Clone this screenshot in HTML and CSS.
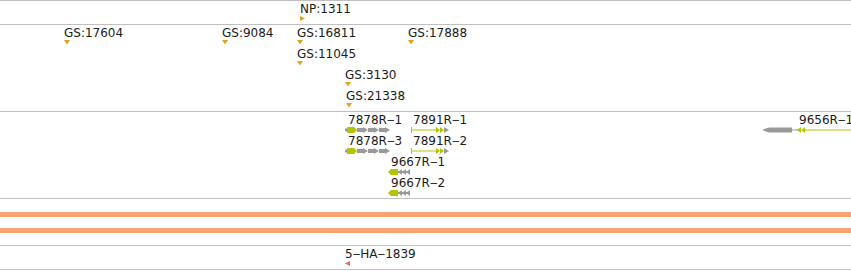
FILE: index.html
```html
<!DOCTYPE html>
<html>
<head>
<meta charset="utf-8">
<link rel="stylesheet" href="styles.css">
</head>
<body>
<div class="browser">
  <div class="track t-np">
    <div class="feat" style="left:300px;top:1px"><span class="lbl">NP:1311</span><svg class="mk" width="6" height="6"><polygon points="0,0 5,2.5 0,5" fill="#e3a21c"/></svg></div>
  </div>
  <div class="track t-gs">
    <div class="feat" style="left:64px;top:1px"><span class="lbl">GS:17604</span><svg class="mk" width="7" height="5"><polygon points="0,0 6,0 3,4.5" fill="#e3a21c"/></svg></div>
    <div class="feat" style="left:222px;top:1px"><span class="lbl">GS:9084</span><svg class="mk" width="7" height="5"><polygon points="0,0 6,0 3,4.5" fill="#e3a21c"/></svg></div>
    <div class="feat" style="left:297px;top:1px"><span class="lbl">GS:16811</span><svg class="mk" width="7" height="5"><polygon points="0,0 6,0 3,4.5" fill="#e3a21c"/></svg></div>
    <div class="feat" style="left:408px;top:1px"><span class="lbl">GS:17888</span><svg class="mk" width="7" height="5"><polygon points="0,0 6,0 3,4.5" fill="#e3a21c"/></svg></div>
    <div class="feat" style="left:297px;top:22px"><span class="lbl">GS:11045</span><svg class="mk" width="7" height="5"><polygon points="0,0 6,0 3,4.5" fill="#e3a21c"/></svg></div>
    <div class="feat" style="left:345px;top:43px"><span class="lbl">GS:3130</span><svg class="mk" width="7" height="5"><polygon points="0,0 6,0 3,4.5" fill="#e3a21c"/></svg></div>
    <div class="feat" style="left:346px;top:64px"><span class="lbl">GS:21338</span><svg class="mk" width="7" height="5"><polygon points="0,0 6,0 3,4.5" fill="#e3a21c"/></svg></div>
  </div>
  <div class="track t-genes">
    <span class="glbl" style="left:348px;top:1px">7878R‒1</span>
    <svg class="gene" style="left:345px;top:15px" width="45" height="6">
      <rect x="0" y="1.5" width="3" height="3" fill="#9a9a9a"/>
      <polygon points="12,1 18,1 18,0 23,3 18,6 18,5 12,5" fill="#9a9a9a"/>
      <polygon points="23,1 29,1 29,0 34,3 29,6 29,5 23,5" fill="#9a9a9a"/>
      <polygon points="34,1 40,1 40,0 45,3 40,6 40,5 34,5" fill="#9a9a9a"/>
      <polygon points="2,0 9,0 12,3 9,6 2,6" fill="#b5c400"/>
    </svg>
    <span class="glbl" style="left:413px;top:1px">7891R‒1</span>
    <svg class="gene" style="left:411px;top:15px" width="39" height="6">
      <rect x="0" y="0" width="1" height="6" fill="#b5c400"/>
      <rect x="0" y="2.5" width="26" height="1" fill="#b5c400"/>
      <polygon points="25,0 29,3 25,6" fill="#b5c400"/>
      <polygon points="29,0 33,3 29,6" fill="#b5c400"/>
      <polygon points="33,0 38,3 33,6" fill="#9a9a9a"/>
    </svg>
    <span class="glbl" style="left:348px;top:22px">7878R‒3</span>
    <svg class="gene" style="left:345px;top:36px" width="45" height="6">
      <rect x="0" y="1.5" width="3" height="3" fill="#9a9a9a"/>
      <polygon points="12,1 18,1 18,0 23,3 18,6 18,5 12,5" fill="#9a9a9a"/>
      <polygon points="23,1 29,1 29,0 34,3 29,6 29,5 23,5" fill="#9a9a9a"/>
      <polygon points="34,1 40,1 40,0 45,3 40,6 40,5 34,5" fill="#9a9a9a"/>
      <polygon points="2,0 9,0 12,3 9,6 2,6" fill="#b5c400"/>
    </svg>
    <span class="glbl" style="left:413px;top:22px">7891R‒2</span>
    <svg class="gene" style="left:411px;top:36px" width="39" height="6">
      <rect x="0" y="0" width="1" height="6" fill="#b5c400"/>
      <rect x="0" y="2.5" width="26" height="1" fill="#b5c400"/>
      <polygon points="25,0 29,3 25,6" fill="#b5c400"/>
      <polygon points="29,0 33,3 29,6" fill="#b5c400"/>
      <polygon points="33,0 38,3 33,6" fill="#9a9a9a"/>
    </svg>
    <span class="glbl" style="left:391px;top:43px">9667R‒1</span>
    <svg class="gene" style="left:388px;top:57px" width="22" height="6">
      <rect x="10" y="2" width="12" height="2" fill="#9a9a9a"/>
      <polygon points="10,3 14,0 14,6" fill="#9a9a9a"/>
      <polygon points="14,3 18,0 18,6" fill="#9a9a9a"/>
      <polygon points="18,3 22,0 22,6" fill="#9a9a9a"/>
      <polygon points="0,3 3,0 10,0 10,6 3,6" fill="#b5c400"/>
    </svg>
    <span class="glbl" style="left:391px;top:64px">9667R‒2</span>
    <svg class="gene" style="left:388px;top:78px" width="22" height="6">
      <rect x="10" y="2" width="12" height="2" fill="#9a9a9a"/>
      <polygon points="10,3 14,0 14,6" fill="#9a9a9a"/>
      <polygon points="14,3 18,0 18,6" fill="#9a9a9a"/>
      <polygon points="18,3 22,0 22,6" fill="#9a9a9a"/>
      <polygon points="0,3 3,0 10,0 10,6 3,6" fill="#b5c400"/>
    </svg>
    <span class="glbl" style="left:799px;top:1px">9656R‒1</span>
    <svg class="gene" style="left:763px;top:15px" width="88" height="6">
      <polygon points="0,2.5 6,0.5 29,0.5 29,5.5 6,5.5 0,3.5" fill="#9a9a9a"/>
      <rect x="29" y="2.5" width="6" height="1" fill="#9a9a9a"/>
      <polygon points="34,3 38,0 38,6" fill="#b5c400"/>
      <polygon points="38,3 42,0 42,6" fill="#b5c400"/>
      <rect x="42" y="2.5" width="46" height="1" fill="#b5c400"/>
    </svg>
  </div>
  <div class="track t-cov">
    <div class="cov-bar"></div>
    <div class="cov-bar"></div>
  </div>
  <div class="track t-ha">
    <div class="feat" style="left:345px;top:1px"><span class="lbl">5‒HA‒1839</span><svg class="mk" width="6" height="6"><polygon points="5,0 0,2.5 5,5" fill="#f06a48"/></svg></div>
  </div>
</div>
</body>
</html>
```
FILE: styles.css
```css
html, body {
  margin: 0;
  padding: 0;
  background: #ffffff;
}
body {
  font-family: "DejaVu Sans", Verdana, sans-serif;
  font-size: 12px;
  color: #1a1a1a;
  width: 851px;
  height: 271px;
  overflow: hidden;
}
.browser {
  border-bottom: 1px solid #c0c0c0;
}
.track {
  position: relative;
  border-top: 1px solid #c0c0c0;
}
.t-np { height: 23px; }
.t-gs { height: 86px; }
.t-genes { height: 86px; }
.t-ha { height: 23px; }
.t-cov {
  height: 47px;
  box-sizing: border-box;
  padding-top: 13px;
  display: flex;
  flex-direction: column;
  gap: 11px;
}
.cov-bar {
  height: 5px;
  background: #f5a470;
}
.feat {
  position: absolute;
  display: flex;
  flex-direction: column;
  align-items: flex-start;
}
.lbl {
  display: block;
  line-height: 14px;
  white-space: nowrap;
}
.mk {
  display: block;
}
.glbl {
  position: absolute;
  line-height: 14px;
  white-space: nowrap;
}
.gene {
  position: absolute;
  display: block;
}
```
